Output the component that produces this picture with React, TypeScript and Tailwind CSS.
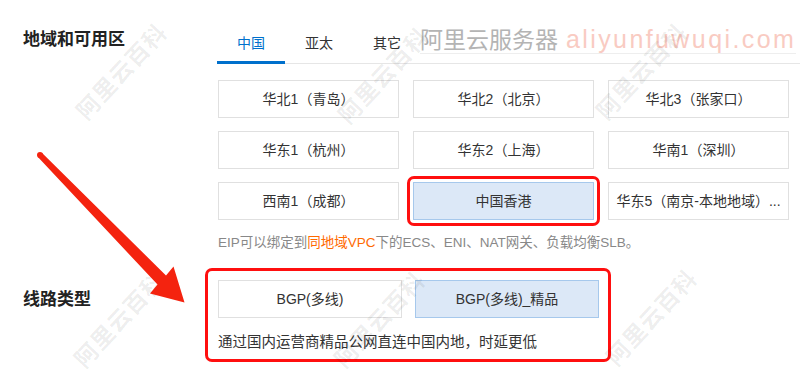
import React from 'react';

const regions = [
  '华北1（青岛）',
  '华北2（北京）',
  '华北3（张家口）',
  '华东1（杭州）',
  '华东2（上海）',
  '华南1（深圳）',
  '西南1（成都）',
  '中国香港',
  '华东5（南京-本地地域）...',
];

const tabs = ['中国', '亚太', '其它'];

// diagonal "阿里云百科" marks sitting over the page
const marks = [
  'left-[122px] top-[72px]',
  'left-[384px] top-[76px]',
  'left-[642px] top-[72px]',
  'left-[120px] top-[320px]',
  'left-[380px] top-[320px]',
  'left-[652px] top-[318px]',
];

const Option = ({ label, active }: { label: string; active?: boolean }) => (
  <div
    className={`flex h-[38px] items-center justify-center overflow-hidden whitespace-nowrap border px-[2px] text-[14px] text-[#333] ${
      active ? 'border-[#a6c8ec] bg-[#dce8f7]' : 'border-[#e0e0e0] bg-white'
    }`}
  >
    {label}
  </div>
);

export default function App() {
  return (
    <div className="relative h-[369px] w-[800px] overflow-hidden bg-white font-['Liberation_Sans','Noto_Sans_CJK_SC',sans-serif] text-[#333]">
      {/* 地域和可用区 */}
      <div className="flex">
        <div className="w-[217px] shrink-0 pl-[23px] pt-[28px] text-[17px] font-semibold leading-6 text-[#222]">
          地域和可用区
        </div>
        <div className="flex-1 pt-[22px]">
          <div className="flex h-[42px] border-b border-[#e6e6e6]">
            {tabs.map((t, i) => (
              <div
                key={t}
                className={`relative flex w-[68px] items-center justify-center pt-[2px] text-[14px] ${
                  i === 0 ? 'text-[#0070cc]' : 'text-[#333]'
                }`}
              >
                {t}
                {i === 0 && <span className="absolute bottom-[-1px] left-0 h-[3px] w-full bg-[#0070cc]" />}
              </div>
            ))}
          </div>

          <div className="ml-px mt-[16px] grid grid-cols-[repeat(3,181px)] gap-x-[14px] gap-y-[13px]">
            {regions.map((r) =>
              r === '中国香港' ? (
                <div key={r} className="relative">
                  <Option label={r} active />
                  <div className="absolute -inset-[6px] rounded-[7px] border-[3px] border-[#ff0f0f]" />
                </div>
              ) : (
                <Option key={r} label={r} />
              )
            )}
          </div>

          <div className="ml-px mt-[13px] text-[13.5px] leading-5 text-[#888]">
            EIP可以绑定到<span className="text-[#ff6a00]">同地域VPC</span>下的ECS、ENI、NAT网关、负载均衡SLB。
          </div>
        </div>
      </div>

      {/* 线路类型 */}
      <div className="mt-[15px] flex">
        <div className="w-[205px] shrink-0 pl-[23px] pt-[20px] text-[17px] font-semibold leading-6 text-[#222]">
          线路类型
        </div>
        <div className="w-[406px] rounded-[7px] border-[3px] border-[#ff0f0f] pb-[7px] pl-[10px] pr-[9px] pt-[9px]">
          <div className="grid grid-cols-[184px_184px] gap-x-[13px]">
            <Option label="BGP(多线)" />
            <Option label="BGP(多线)_精品" active />
          </div>
          <div className="mt-[14px] text-[14.5px] leading-5 text-[#333]">通过国内运营商精品公网直连中国内地，时延更低</div>
        </div>
      </div>

      {/* watermarks */}
      <div className="pointer-events-none absolute left-[420px] top-[27px] flex items-baseline gap-[8px] border-b border-[#eeeeee] pb-[1px] leading-none">
        <span className="text-[23px] text-[#b4b4b4]">阿里云服务器</span>
        <span className="text-[25px] tracking-[2.4px] text-[#f9cbc2]">aliyunfuwuqi.com</span>
      </div>
      {marks.map((m) => (
        <div
          key={m}
          className={`pointer-events-none absolute ${m} -translate-x-1/2 -translate-y-1/2 -rotate-[47deg] whitespace-nowrap text-[23px] font-bold tracking-[1px] text-[rgba(0,0,0,0.08)]`}
        >
          阿里云百科
        </div>
      ))}

      {/* red arrow */}
      <svg className="pointer-events-none absolute left-0 top-0" width="800" height="369" viewBox="0 0 800 369">
        <polygon
          points="42.1,152.9 166,275.5 173.5,266.5 184.5,302.5 150,293.5 157.5,284.5 37.9,157.1"
          fill="#f4230f"
        />
        <circle cx="40" cy="155" r="3" fill="#f4230f" />
      </svg>
    </div>
  );
}
